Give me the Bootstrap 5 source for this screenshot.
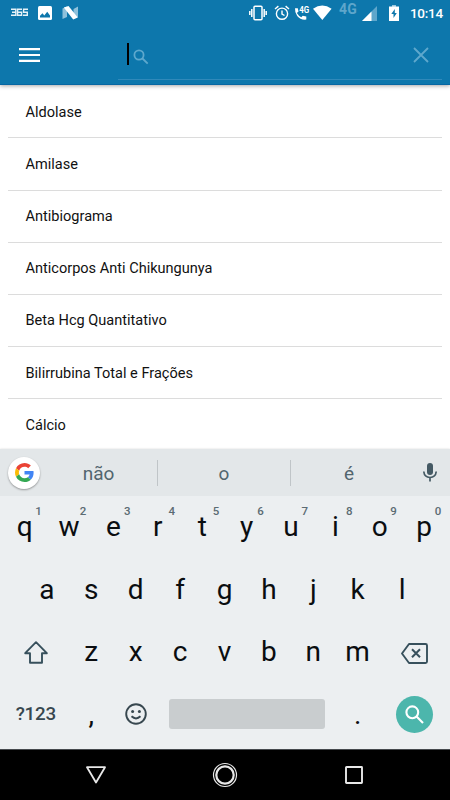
<!DOCTYPE html>
<html lang="pt-BR">
<head>
<meta charset="utf-8">
<meta name="viewport" content="width=device-width, initial-scale=1">
<title>Exames</title>
<link href="https://cdn.jsdelivr.net/npm/bootstrap@5.3.0/dist/css/bootstrap.min.css" rel="stylesheet">
<style>
body{font-family:Roboto,"Liberation Sans",sans-serif;width:450px;height:800px;color:#111}
svg{display:block;flex:none}
.app-header{height:85px;background:#0d77ac;border-bottom:1px solid #0767a3;box-shadow:0 1px 4px rgba(0,0,0,.35);z-index:2}
.status{height:26px;color:#fff;line-height:1}
.net{width:18px;font-size:14px;font-weight:700;color:#5ea6cb;margin:2px 0 0 7.5px;letter-spacing:.2px}
.clock{width:32px;font-size:13.5px;font-weight:500;letter-spacing:-.3px;margin:6.5px 0 0 11px;white-space:nowrap}
.search-field{width:324px;height:54px;margin:0 8px 0 78px;border-bottom:1px solid #3089ba}
.caret{width:2px;height:22px;background:#000;margin:17px 0 0 9px}
.exams{height:364px;padding:1.4px 8px 0;overflow:hidden}
.exams .list-group-item{height:52.1px;flex:none;padding:2px 0 0 17.5px;border-color:#dcdcdc;border-width:0 0 1px;font-size:14.55px;color:#111;background:transparent}
.keyboard{height:301px;background:#eceff1;box-shadow:0 0 2px rgba(0,0,0,.15);z-index:1;border-bottom:1px solid #45494d}
.suggest{height:47px;background:#e3e7e9;font-size:19px;color:#52656e}
.glogo{width:32px;height:32px;background:#fff;box-shadow:0 1px 2px rgba(0,0,0,.35);margin-left:8px}
.word{width:132px;line-height:47px;padding-top:2px}
.sep{width:1px;height:26px;background:#c0c5c8}
.keys{height:62.6px;padding:0 3.5px 0 2.5px}
.key{width:44.4px;height:62.6px;font-size:28px;line-height:61.5px;text-align:center;color:#0a0d10;position:relative;flex:none}
.key.wide{width:66.6px}
.key small{position:absolute;left:36px;top:8px;width:0;display:flex;justify-content:center;font-size:11.5px;line-height:14px;font-weight:500;color:#5b6b73}
.key.sym{font-size:18.8px;font-weight:500;color:#37474f;letter-spacing:-.25px}
.spacebar{width:156px;height:30.5px;background:#c9cdcf;border-radius:3px;margin:-2px 10.8px 0}
.go{width:37px;height:37px;background:#4cb6ac}
.sysnav{height:50px;background:#000}
</style>
<script src="https://cdn.jsdelivr.net/npm/bootstrap@5.3.0/dist/js/bootstrap.bundle.min.js"></script>
</head>
<body class="d-flex flex-column overflow-hidden bg-white">
<header class="app-header position-relative flex-shrink-0">
  <div class="status d-flex align-items-start">
    <svg width="18" height="10" viewBox="0 0 18 10" style="margin:8px 0 0 11px" fill="none" stroke="#e6f2f8" stroke-width="1.4"><path d="M0 1.2H4.8V7.2H0M1 4.2H4.8M11 1.2H6.6V7.2H10.6V4.2H6.6M17 1.2H12.6V4.2H16.3V7.2H12"/></svg>
    <svg width="14" height="14" viewBox="0 0 14 14" style="margin:6px 0 0 8.5px"><rect width="14" height="14" rx="1.5" fill="#fff"/><path d="M2 11.5V9.8L4.5 7.3 6.3 9.5 9.2 5.8 12 9.5V11.5Z" fill="#0d77ac"/></svg>
    <svg width="17" height="14" viewBox="0 0 17 14" style="margin:6px 0 0 10px"><path d="M.5 2.5 5 .5V11L.5 13ZM11.5 3 16 .5V11L11.5 13Z" fill="#8fc1db"/><path d="M1.8 1.5 6.5 0 15.8 11.5 11.2 13.5Z" fill="#fff"/></svg>
    <svg class="ms-auto" width="18" height="16" viewBox="0 0 18 16" style="margin-top:5px" fill="none" stroke="#fff" stroke-width="1.5"><rect x="5" y="1.2" width="8" height="13.6" rx="1"/><path d="M2.8 4V12M15.2 4V12M.8 6V10M17.2 6V10"/></svg>
    <svg width="16" height="16" viewBox="0 0 16 16" style="margin:5px 0 0 7px" fill="none" stroke="#fff" stroke-width="1.4"><circle cx="8" cy="8.7" r="5.6"/><path d="M8 5.4V9L10.5 10.5M1 4 4.4 1.1M15 4 11.6 1.1"/></svg>
    <svg width="17" height="16" viewBox="0 0 17 16" style="margin:5px 0 0 3.5px"><path d="M1 3.2H3.8L4.5 6.6 2.9 8Q4.6 11 7.3 12.3L8.7 10.7 12.3 11.5V14.6Q6.5 15.3 3.2 11 .7 7.6 1 3.2Z" fill="#fff"/><text x="5.3" y="8" font-size="8.5" font-weight="700" font-family="Roboto" fill="#fff" textLength="10" lengthAdjust="spacingAndGlyphs">4G</text></svg>
    <svg width="19" height="15" viewBox="0 0 19 15" style="margin:5px 0 0 2px"><path d="M0 3.7Q9.3-2.7 18.6 3.7L9.3 15Z" fill="#fff"/></svg>
    <span class="net">4G</span>
    <svg width="15" height="15" viewBox="0 0 15 15" style="margin:6px 0 0 5px"><path d="M15 0V15H0Z" fill="#5ea6cb"/><path d="M9.5 5.5V15H0Z" fill="#fff"/></svg>
    <svg width="10" height="16" viewBox="0 0 10 16" style="margin:5px 0 0 12px"><path d="M3 0H7V1.5H10V16H0V1.5H3Z" fill="#fff"/><path d="M3 0H7V1.5H3Z" fill="#9ac8df"/><path d="M5.8 4 2.3 9H4.5V13L7.8 8H5.8Z" fill="#0d77ac"/></svg>
    <span class="clock me-2">10:14</span>
  </div>
  <div class="d-flex">
    <svg width="21" height="16" viewBox="0 0 21 16" style="margin:21px 0 0 19px" stroke="#fff" stroke-width="2.2"><path d="M0 2.2H21M0 8H21M0 13.8H21"/></svg>
    <div class="search-field d-flex">
      <i class="caret"></i>
      <svg width="16" height="16" viewBox="0 0 16 16" style="margin:22.5px 0 0 4px" fill="none" stroke="#5ea8cd" stroke-width="1.8"><circle cx="6" cy="6" r="4.6"/><path d="M9.5 9.5 14.7 14.7"/></svg>
      <svg class="ms-auto" width="16" height="16" viewBox="0 0 16 16" style="margin:21px 13.5px 0 0" stroke="#5ea8cd" stroke-width="1.8"><path d="M1 1 15 15M15 1 1 15"/></svg>
    </div>
  </div>
</header>
<main class="exams flex-shrink-0">
  <div class="list-group list-group-flush">
    <div class="list-group-item d-flex align-items-center">Aldolase</div>
    <div class="list-group-item d-flex align-items-center">Amilase</div>
    <div class="list-group-item d-flex align-items-center">Antibiograma</div>
    <div class="list-group-item d-flex align-items-center">Anticorpos Anti Chikungunya</div>
    <div class="list-group-item d-flex align-items-center">Beta Hcg Quantitativo</div>
    <div class="list-group-item d-flex align-items-center">Bilirrubina Total e Frações</div>
    <div class="list-group-item d-flex align-items-center border-0">Cálcio</div>
  </div>
</main>
<section class="keyboard position-relative flex-shrink-0">
  <div class="suggest d-flex align-items-center">
    <div class="glogo rounded-circle d-flex align-items-center justify-content-center">
      <svg width="19" height="19" viewBox="0 0 48 48"><path fill="#EA4335" d="M24 9.5c3.54 0 6.71 1.22 9.21 3.6l6.85-6.85C35.9 2.38 30.47 0 24 0 14.62 0 6.51 5.38 2.56 13.22l7.98 6.19C12.43 13.72 17.74 9.5 24 9.5z"/><path fill="#4285F4" d="M46.98 24.55c0-1.57-.15-3.09-.38-4.55H24v9.02h12.94c-.58 2.96-2.26 5.48-4.78 7.18l7.73 6c4.51-4.18 7.09-10.36 7.09-17.65z"/><path fill="#FBBC05" d="M10.53 28.59A14.5 14.5 0 0 1 9.77 24c0-1.6.27-3.14.76-4.59l-7.98-6.19A24 24 0 0 0 0 24c0 3.88.92 7.54 2.56 10.78l7.97-6.19z"/><path fill="#34A853" d="M24 48c6.48 0 11.93-2.13 15.89-5.81l-7.73-6c-2.15 1.45-4.92 2.3-8.16 2.3-6.26 0-11.57-4.22-13.47-9.91l-7.98 6.19C6.51 42.62 14.62 48 24 48z"/></svg>
    </div>
    <div class="word text-center" style="width:117px">não</div>
    <i class="sep"></i><div class="word text-center">o</div>
    <i class="sep"></i><div class="word text-center" style="width:116px">é</div>
    <svg width="14" height="19" viewBox="0 0 14 19" style="margin-left:15.5px"><rect x="4" y="0" width="6" height="12" rx="3" fill="#455a64"/><path d="M.8 8.5Q1.2 14.3 7 14.5 12.8 14.3 13.2 8.5M7 14.5V18.5" fill="none" stroke="#455a64" stroke-width="1.7"/></svg>
  </div>
  <div class="keys d-flex">
    <div class="key">q<small>1</small></div><div class="key">w<small>2</small></div><div class="key">e<small>3</small></div><div class="key">r<small>4</small></div><div class="key">t<small>5</small></div><div class="key">y<small>6</small></div><div class="key">u<small>7</small></div><div class="key">i<small>8</small></div><div class="key">o<small>9</small></div><div class="key">p<small>0</small></div>
  </div>
  <div class="keys d-flex justify-content-center">
    <div class="key">a</div><div class="key">s</div><div class="key">d</div><div class="key">f</div><div class="key">g</div><div class="key">h</div><div class="key">j</div><div class="key">k</div><div class="key">l</div>
  </div>
  <div class="keys d-flex">
    <div class="key wide d-flex align-items-center justify-content-center"><svg width="24" height="23" viewBox="0 0 24 23" fill="none" stroke="#37505c" stroke-width="1.9" stroke-linejoin="round"><path d="M12 1.2 22.8 12.2H18V21.8H6V12.2H1.2Z"/></svg></div>
    <div class="key">z</div><div class="key">x</div><div class="key">c</div><div class="key">v</div><div class="key">b</div><div class="key">n</div><div class="key">m</div>
    <div class="key wide d-flex align-items-center justify-content-center"><svg width="27" height="21" viewBox="0 0 27 21" style="margin:3px 0 0 2px" fill="none" stroke="#37505c" stroke-width="1.9" stroke-linejoin="round"><path d="M8 1H24.5Q26 1 26 2.5V18.5Q26 20 24.5 20H8L1 10.5Z"/><path d="M11 6.3 19 14.3M19 6.3 11 14.3" stroke-width="2"/></svg></div>
  </div>
  <div class="keys d-flex align-items-center">
    <div class="key wide sym">?123</div>
    <div class="key">,</div>
    <div class="key d-flex align-items-center justify-content-center"><svg width="22" height="22" viewBox="0 0 22 22" style="margin-top:-3px" fill="none" stroke="#37474f" stroke-width="1.9"><circle cx="11" cy="11" r="9.8"/><path d="M6.5 13.3Q11 17.5 15.5 13.3"/><g fill="#37474f" stroke="none"><circle cx="7.6" cy="8.4" r="1.5"/><circle cx="14.4" cy="8.4" r="1.5"/></g></svg></div>
    <div class="spacebar"></div>
    <div class="key">.</div>
    <div class="key wide d-flex align-items-center justify-content-center"><span class="go rounded-circle d-flex align-items-center justify-content-center" style="margin:-1px 0 0 2px"><svg width="19" height="19" viewBox="0 0 19 19" fill="none" stroke="#fff" stroke-width="2.1"><circle cx="7.3" cy="7.3" r="5.9"/><path d="M11.6 11.6 18 18"/></svg></span></div>
  </div>
</section>
<nav class="sysnav d-flex align-items-center flex-shrink-0">
  <svg width="20" height="18" viewBox="0 0 20 18" style="margin-left:86px" fill="none" stroke="#e8e8e8" stroke-width="1.8" stroke-linejoin="round"><path d="M1 1.2H19L10 16.5Z"/></svg>
  <svg width="26" height="26" viewBox="0 0 26 26" style="margin-left:106px" fill="none" stroke="#e8e8e8"><circle cx="13" cy="13" r="11.5" stroke-width="1.2"/><circle cx="13" cy="13" r="8.7" stroke-width="2.2"/></svg>
  <svg width="18" height="18" viewBox="0 0 18 18" style="margin-left:107px" fill="none" stroke="#e8e8e8" stroke-width="1.9"><rect x="1" y="1" width="16" height="16" rx=".5"/></svg>
</nav>
</body>
</html>
